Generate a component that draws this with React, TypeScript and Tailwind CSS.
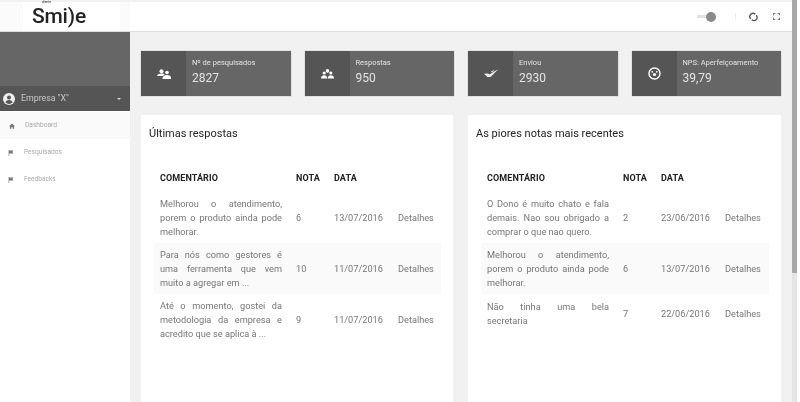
import React from "react";

const font = { fontFamily: "Roboto, 'Liberation Sans', sans-serif" };

function Users2() {
  return (
    <svg width="14" height="10" viewBox="0 0 14 10" fill="#fff">
      <circle cx="4.500" cy="2.200" r="2" />
      <path d="M0 7c0-1.600 2-2.500 4.500-2.500 1.500 0 2.500.3 3.200 1L6 7z" />
      <circle cx="10" cy="3.500" r="1.800" />
      <path d="M5.500 9c0-1.500 2-3 4.500-3s4 1.200 4 3v1H5.500z" />
    </svg>
  );
}
function Users3() {
  return (
    <svg width="13" height="10" viewBox="0 0 13 10" fill="#fff">
      <circle cx="6.500" cy="1.900" r="1.800" />
      <circle cx="3.200" cy="4" r="1.600" />
      <circle cx="9.800" cy="4" r="1.600" />
      <path d="M0 9.500c0-2 1.500-3.200 3.200-3.200S6.200 7.500 6.200 9.500zM6.800 9.500c0-2 1.300-3.200 3-3.200S13 7.500 13 9.500z" />
    </svg>
  );
}
function Check() {
  return (
    <svg width="14" height="9" viewBox="0 0 14 9" fill="#eee">
      <path d="M0 4.800 4 4.500 5.500 5.500 10 2.500 14 .5 6.500 8 3.500 8z" />
      <path d="M6.500 3 9 1.500 10.500 .5 8.500 3z" />
    </svg>
  );
}
function Smile() {
  return (
    <svg width="13" height="13" viewBox="0 0 13 13" fill="none" stroke="#fff" strokeWidth="1.400">
      <circle cx="6.500" cy="6.500" r="5.500" />
      <circle cx="6.500" cy="7.500" r="1.600" fill="#fff" stroke="none" />
      <circle cx="4.200" cy="4.800" r=".9" fill="#fff" stroke="none" />
      <circle cx="8.800" cy="4.800" r=".9" fill="#fff" stroke="none" />
    </svg>
  );
}

function Stat({ icon, label, value }: { icon: React.ReactNode; label: string; value: string }) {
  return (
    <div className="flex h-[45px] flex-1 bg-[#666666] text-[#e4e4e4] shadow-[0_0_1px_#999]">
      <div className="flex w-[45px] items-center justify-center bg-[#555555]">{icon}</div>
      <div className="pl-[6px] pt-[7px]">
        <div className="text-[7.500px] leading-[10px]">{label}</div>
        <div className="mt-[2px] text-[12px] leading-[16px]">{value}</div>
      </div>
    </div>
  );
}

type Row = { c: string[]; n: string; d: string; h: string };

function Panel({ title, rows, className }: { title: string; rows: Row[]; className: string }) {
  return (
    <div className={`flex h-[287px] flex-col bg-white pl-[8px] ${className}`}>
      <h2 className="mt-[12px] text-[11px] leading-[14px] text-[#222]">{title}</h2>
      <div className="ml-[5px] mr-[12px] mt-[21px]">
        <div className="flex h-[30px] items-center pt-[3px] text-[9px] font-bold tracking-[0.1px] text-[#222]">
          <div className="ml-[6px] w-[136px]">COMENTÁRIO</div>
          <div className="w-[38px]">NOTA</div>
          <div>DATA</div>
        </div>
        {rows.map((r, i) => (
          <div
            key={i}
            className={`flex items-center text-[9.200px] text-[#777] ${r.h} ${i === 1 ? "bg-[#fafafa]" : ""}`}
          >
            <div className="ml-[6px] w-[122px] leading-[14px]">
              {r.c.map((line, j) => (
                <div key={j} className={j < r.c.length - 1 ? "[text-align-last:justify]" : ""}>
                  {line}
                </div>
              ))}
            </div>
            <div className="ml-[14px] w-[38px]">{r.n}</div>
            <div className="w-[64px]">{r.d}</div>
            <div>Detalhes</div>
          </div>
        ))}
      </div>
    </div>
  );
}

const left: Row[] = [
  { c: ["Melhorou o atendimento,", "porem o produto ainda pode", "melhorar."], n: "6", d: "13/07/2016", h: "h-[51px]" },
  { c: ["Para nós como gestores é", "uma ferramenta que vem", "muito a agregar em ..."], n: "10", d: "11/07/2016", h: "h-[51px]" },
  { c: ["Até o momento, gostei da", "metodologia da empresa e", "acredito que se aplica à ..."], n: "9", d: "11/07/2016", h: "h-[51px]" },
];
const right: Row[] = [
  { c: ["O Dono é muito chato e fala", "demais. Nao sou obrigado a", "comprar o que nao quero."], n: "2", d: "23/06/2016", h: "h-[51px]" },
  { c: ["Melhorou o atendimento,", "porem o produto ainda pode", "melhorar."], n: "6", d: "13/07/2016", h: "h-[51px]" },
  { c: ["Não tinha uma bela", "secretaria"], n: "7", d: "22/06/2016", h: "h-[39px]" },
];

function Nav({ label, home }: { label: string; home?: boolean }) {
  return (
    <div className={`flex h-[27px] items-center text-[6.600px] text-[#aaa] ${home ? "bg-[#fafafa] pl-[9px]" : "pl-[8px]"}`}>
      {home ? (
        <svg width="6" height="6" viewBox="0 0 10 10" fill="#777"><path d="M5 1 0 5.500h1.500V9.500h2.500V6.500h2V9.500h2.500V5.500H10z" /></svg>
      ) : (
        <svg width="6" height="6" viewBox="0 0 10 10" fill="#777"><path d="M1 0h1v10H1zM2 1h7L7.500 3.500 9 6H2z" /></svg>
      )}
      <span className="ml-[10px]">{label}</span>
    </div>
  );
}

export default function App() {
  return (
    <div className="flex h-[402px] w-[800px] overflow-hidden bg-[#f1f1f1] blur-[0.4px]" style={font}>
      <div className="flex min-w-0 flex-1 flex-col">
        <header className="mt-[2px] flex h-[30px] shrink-0 items-center border-b border-[#dedede] bg-white">
          <div className="flex h-full w-[130px] items-center bg-[#fbfbfb]">
            <div className="ml-[23px] flex h-full w-[97px] items-center bg-white pb-[5px] pl-[9px]">
              <div className="flex flex-col text-[#222]">
                <span className="mb-[2px] ml-[10px] h-[3px] text-[3px] leading-[3px]">cliente</span>
                <span className="text-[21px] font-medium leading-[21px] tracking-[-0.2px]">Smi)e</span>
              </div>
            </div>
          </div>
          <div className="ml-auto flex items-center">
            <div className="h-[3px] w-[9px] bg-[#e2e2e2]" />
            <div className="h-[10px] w-[10px] rounded-full bg-[#8a8a8a]" />
            <div className="ml-[19px] h-[8px] w-px bg-[#eee]" />
            <svg className="ml-[13px]" width="9" height="10" viewBox="0 0 10 10" fill="none" stroke="#555" strokeWidth="1.500">
              <path d="M2 7A3.500 3.500 0 0 1 7 2M8 3A3.500 3.500 0 0 1 3 8" />
            </svg>
            <svg className="ml-[15px] mr-[12px]" width="7" height="7" viewBox="0 0 8 8" fill="none" stroke="#777" strokeWidth="1.300">
              <path d="M.6 2.500V.6h2M5.400.6h2v1.900M7.400 5.500v1.900h-2M2.600 7.400h-2V5.500" />
            </svg>
          </div>
        </header>
        <div className="flex min-h-0 flex-1">
          <aside className="w-[130px] shrink-0 bg-white">
            <div className="flex h-[79px] flex-col justify-end bg-[#666666]">
              <div className="flex h-[25px] items-center bg-[#555555] pl-[3px] pr-[9px] text-[8.800px] text-[#c8c8c8]">
                <svg width="12" height="12" viewBox="0 0 12 12">
                  <circle cx="6" cy="6" r="6" fill="#eee" />
                  <circle cx="6" cy="4.500" r="2" fill="#555" />
                  <path d="M2.500 9.500c.5-1.800 2-2.500 3.500-2.500s3 .7 3.500 2.500A5 5 0 0 1 2.500 9.500z" fill="#555" />
                </svg>
                <span className="ml-[6px]">Empresa "X"</span>
                <span className="ml-auto h-0 w-0 border-x-[2px] border-t-[2px] border-x-transparent border-t-[#ddd]" />
              </div>
            </div>
            <div className="pt-[1px]">
              <Nav label="Dashboard" home />
              <Nav label="Pesquisados" />
              <Nav label="Feedbacks" />
            </div>
          </aside>
          <main className="min-w-0 flex-1 pl-[11px] pr-[11px] pt-[19px]">
            <div className="flex gap-[14px]">
              <Stat icon={<Users2 />} label="Nº de pesquisados" value="2827" />
              <Stat icon={<Users3 />} label="Respostas" value="950" />
              <Stat icon={<Check />} label="Enviou" value="2930" />
              <Stat icon={<Smile />} label="NPS: Aperfeiçoamento" value="39,79" />
            </div>
            <div className="mt-[19px] flex gap-[15px]">
              <Panel title="Últimas respostas" rows={left} className="w-[312px]" />
              <Panel title="As piores notas mais recentes" rows={right} className="flex-1" />
            </div>
          </main>
        </div>
      </div>
      <div className="flex w-[8px] shrink-0 bg-white">
        <div className="w-[5px] bg-[#e4e4e4]">
          <div className="h-[273px] w-full bg-[#a8a8a8]" />
        </div>
      </div>
    </div>
  );
}
